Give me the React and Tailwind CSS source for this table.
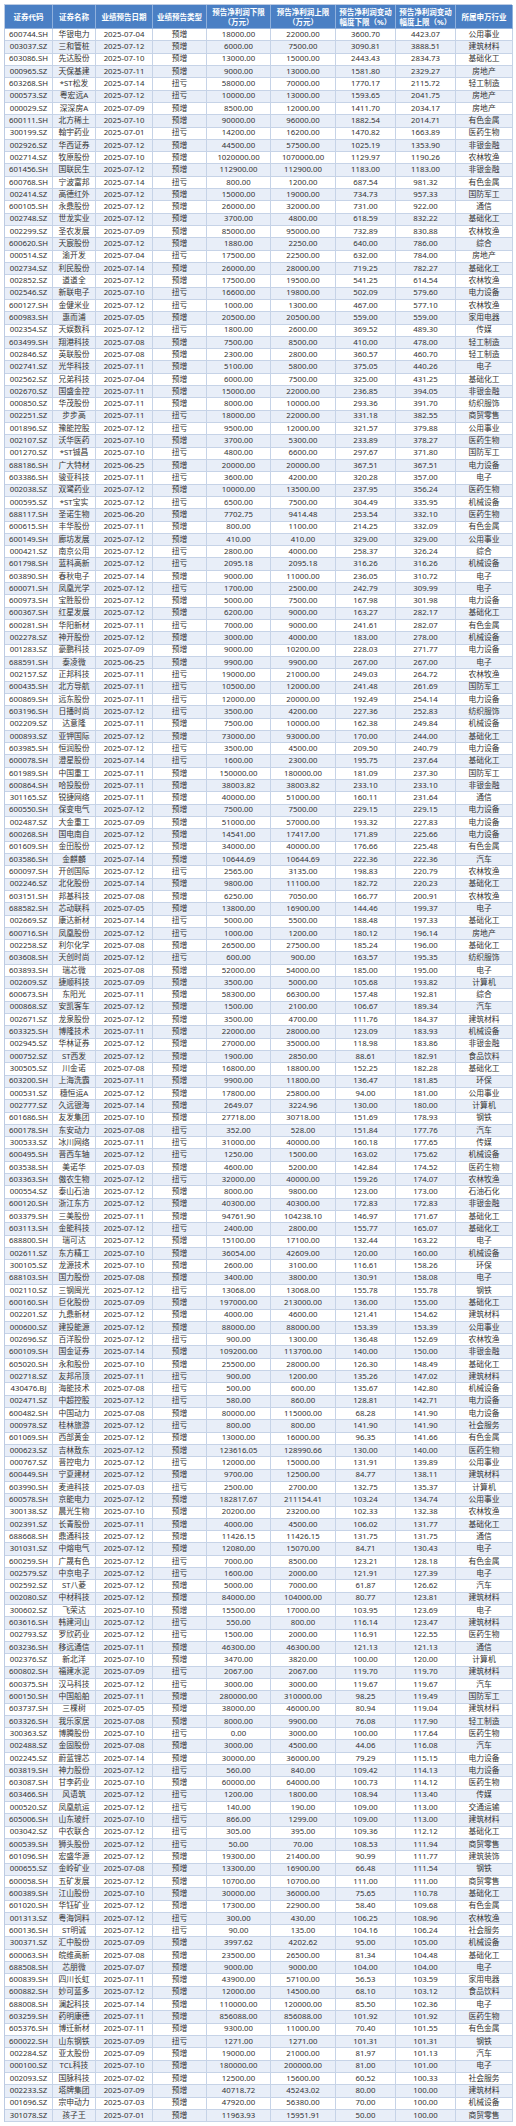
import React from 'react';

const headers = [
  ['证券代码'],
  ['证券名称'],
  ['业绩预告日期'],
  ['业绩预告类型'],
  ['预告净利润下限', '（万元）'],
  ['预告净利润上限', '（万元）'],
  ['预告净利润变动', '幅度下限（%）'],
  ['预告净利润变动', '幅度上限（%）'],
  ['所属申万行业'],
];

const raw = `
600744.SH 华银电力 2025-07-04 预增 18000.00 22000.00 3600.70 4423.07 公用事业
003037.SZ 三和管桩 2025-07-12 预增 6000.00 7500.00 3090.81 3888.51 建筑材料
603086.SH 先达股份 2025-07-10 预增 13000.00 15000.00 2443.43 2834.73 基础化工
000965.SZ 天保基建 2025-07-11 预增 9000.00 13000.00 1581.80 2329.27 房地产
603268.SH *ST松发 2025-07-14 扭亏 58000.00 70000.00 1770.17 2115.72 轻工制造
000573.SZ 粤宏远A 2025-07-12 扭亏 10000.00 13000.00 1593.65 2041.75 房地产
000029.SZ 深深房A 2025-07-09 预增 8500.00 12000.00 1411.70 2034.17 房地产
600111.SH 北方稀土 2025-07-10 预增 90000.00 96000.00 1882.54 2014.71 有色金属
300199.SZ 翰宇药业 2025-07-01 扭亏 14200.00 16200.00 1470.82 1663.89 医药生物
002926.SZ 华西证券 2025-07-12 预增 44500.00 57500.00 1025.19 1353.90 非银金融
002714.SZ 牧原股份 2025-07-10 预增 1020000.00 1070000.00 1129.97 1190.26 农林牧渔
601456.SH 国联民生 2025-07-12 预增 112900.00 112900.00 1183.00 1183.00 非银金融
600768.SH 宁波富邦 2025-07-14 扭亏 800.00 1200.00 687.54 981.32 有色金属
002414.SZ 高德红外 2025-07-12 预增 15000.00 19000.00 734.73 957.33 国防军工
600105.SH 永鼎股份 2025-07-12 预增 26000.00 32000.00 731.00 922.00 通信
002748.SZ 世龙实业 2025-07-12 预增 3700.00 4800.00 618.59 832.22 基础化工
002299.SZ 圣农发展 2025-07-09 预增 85000.00 95000.00 732.89 830.88 农林牧渔
600620.SH 天宸股份 2025-07-12 预增 1880.00 2250.00 640.00 786.00 综合
000514.SZ 渝开发 2025-07-04 扭亏 17500.00 22500.00 632.00 784.00 房地产
002734.SZ 利民股份 2025-07-14 预增 26000.00 28000.00 719.25 782.27 基础化工
002852.SZ 道道全 2025-07-12 预增 17500.00 19500.00 541.25 614.54 农林牧渔
002546.SZ 新联电子 2025-07-10 扭亏 16600.00 19800.00 502.09 579.60 电力设备
600127.SH 金健米业 2025-07-12 扭亏 1000.00 1300.00 467.00 577.10 农林牧渔
600983.SH 惠而浦 2025-07-05 预增 20500.00 20500.00 559.00 559.00 家用电器
002354.SZ 天娱数科 2025-07-12 扭亏 1800.00 2600.00 369.52 489.30 传媒
603499.SH 翔港科技 2025-07-08 预增 7500.00 8500.00 410.00 478.00 轻工制造
002846.SZ 英联股份 2025-07-08 预增 2300.00 2800.00 360.57 460.70 轻工制造
002741.SZ 光华科技 2025-07-11 预增 5100.00 5800.00 375.05 440.26 电子
002562.SZ 兄弟科技 2025-07-04 预增 6000.00 7500.00 325.00 431.25 基础化工
002670.SZ 国盛金控 2025-07-11 预增 15000.00 22000.00 236.85 394.05 非银金融
000850.SZ 华茂股份 2025-07-11 预增 8000.00 10000.00 293.36 391.70 纺织服饰
002251.SZ 步步高 2025-07-11 扭亏 18000.00 22000.00 331.18 382.55 商贸零售
001896.SZ 豫能控股 2025-07-12 扭亏 9500.00 12000.00 321.57 379.88 公用事业
002107.SZ 沃华医药 2025-07-10 预增 3700.00 5300.00 233.89 378.27 医药生物
001270.SZ *ST铖昌 2025-07-10 扭亏 4800.00 6600.00 297.67 371.80 国防军工
688186.SH 广大特材 2025-06-25 预增 20000.00 20000.00 367.51 367.51 电力设备
603386.SH 骏亚科技 2025-07-11 扭亏 3600.00 4200.00 320.28 357.00 电子
002038.SZ 双鹭药业 2025-07-12 预增 10000.00 13500.00 237.95 356.24 医药生物
000595.SZ *ST宝实 2025-07-12 扭亏 6500.00 7500.00 304.49 335.95 机械设备
688117.SH 圣诺生物 2025-06-20 预增 7702.75 9414.48 253.54 332.10 医药生物
600615.SH 丰华股份 2025-07-11 预增 800.00 1100.00 214.25 332.09 有色金属
600149.SH 廊坊发展 2025-07-12 预增 410.00 410.00 329.00 329.00 公用事业
000421.SZ 南京公用 2025-07-12 扭亏 2800.00 4000.00 258.37 326.24 综合
601798.SH 蓝科高新 2025-07-12 扭亏 2095.18 2095.18 316.26 316.26 机械设备
603890.SH 春秋电子 2025-07-14 预增 9000.00 11000.00 236.05 310.72 电子
600071.SH 凤凰光学 2025-07-12 扭亏 1700.00 2500.00 242.79 309.99 电子
600973.SH 宝胜股份 2025-07-12 预增 5000.00 7500.00 167.98 301.98 电力设备
600367.SH 红星发展 2025-07-12 预增 6200.00 9000.00 163.27 282.17 基础化工
600281.SH 华阳新材 2025-07-11 扭亏 7000.00 9000.00 241.61 282.07 有色金属
002278.SZ 神开股份 2025-07-12 预增 3000.00 4000.00 183.00 278.00 机械设备
001283.SZ 豪鹏科技 2025-07-09 预增 9000.00 10200.00 228.03 271.77 电力设备
688591.SH 泰凌微 2025-06-25 预增 9900.00 9900.00 267.00 267.00 电子
002157.SZ 正邦科技 2025-07-11 扭亏 19000.00 21000.00 249.03 264.72 农林牧渔
600435.SH 北方导航 2025-07-11 扭亏 10500.00 12000.00 241.48 261.69 国防军工
600869.SH 远东股份 2025-07-11 扭亏 12000.00 20000.00 192.49 254.14 电力设备
603196.SH 日播时尚 2025-07-12 扭亏 3500.00 4200.00 227.36 252.83 纺织服饰
002209.SZ 达意隆 2025-07-11 预增 7500.00 10000.00 162.38 249.84 机械设备
000893.SZ 亚钾国际 2025-07-12 预增 73000.00 93000.00 170.00 244.00 基础化工
603985.SH 恒润股份 2025-07-12 扭亏 3500.00 4500.00 209.50 240.79 电力设备
600078.SH 澄星股份 2025-07-14 扭亏 1600.00 2300.00 195.75 237.64 基础化工
601989.SH 中国重工 2025-07-11 预增 150000.00 180000.00 181.09 237.30 国防军工
600864.SH 哈投股份 2025-07-11 预增 38003.82 38003.82 233.10 233.10 非银金融
301165.SZ 锐捷网络 2025-07-11 预增 40000.00 51000.00 160.11 231.64 通信
600550.SH 保变电气 2025-07-12 预增 7500.00 7500.00 229.15 229.15 电力设备
002487.SZ 大金重工 2025-07-09 预增 51000.00 57000.00 193.32 227.83 电力设备
600268.SH 国电南自 2025-07-12 预增 14541.00 17417.00 171.89 225.66 电力设备
601609.SH 金田股份 2025-07-12 预增 34000.00 40000.00 176.66 225.48 有色金属
603586.SH 金麒麟 2025-07-14 预增 10644.69 10644.69 222.36 222.36 汽车
600097.SH 开创国际 2025-07-12 扭亏 2565.00 3135.00 198.83 220.79 农林牧渔
002246.SZ 北化股份 2025-07-14 预增 9800.00 11100.00 182.72 220.23 基础化工
603151.SH 邦基科技 2025-07-08 预增 6250.00 7050.00 166.77 200.91 农林牧渔
688582.SH 芯动联科 2025-07-05 预增 13800.00 16900.00 144.46 199.37 电子
002669.SZ 康达新材 2025-07-14 扭亏 5000.00 5500.00 188.48 197.33 基础化工
600716.SH 凤凰股份 2025-07-12 扭亏 1000.00 1200.00 180.12 196.14 房地产
002258.SZ 利尔化学 2025-07-08 预增 26500.00 27500.00 185.24 196.00 基础化工
603608.SH 天创时尚 2025-07-12 扭亏 600.00 900.00 163.57 195.35 纺织服饰
603893.SH 瑞芯微 2025-07-08 预增 52000.00 54000.00 185.00 195.00 电子
002609.SZ 捷顺科技 2025-07-09 预增 3500.00 5000.00 105.68 193.82 计算机
600673.SH 东阳光 2025-07-11 预增 58300.00 66300.00 157.48 192.81 综合
000868.SZ 安凯客车 2025-07-12 预增 1500.00 2100.00 106.67 189.34 汽车
002671.SZ 龙泉股份 2025-07-12 预增 3500.00 4700.00 111.76 184.37 建筑材料
603325.SH 博隆技术 2025-07-11 预增 22000.00 28000.00 123.09 183.93 机械设备
002945.SZ 华林证券 2025-07-12 预增 27000.00 35000.00 118.98 183.86 非银金融
000752.SZ ST西发 2025-07-12 预增 1900.00 2850.00 88.61 182.91 食品饮料
300505.SZ 川金诺 2025-07-08 预增 16800.00 18800.00 152.25 182.28 基础化工
603200.SH 上海洗霸 2025-07-11 预增 9900.00 11800.00 136.47 181.85 环保
000531.SZ 穗恒运A 2025-07-12 预增 17800.00 25800.00 94.00 181.00 公用事业
002777.SZ 久远银海 2025-07-14 预增 2649.07 3224.96 130.00 180.00 计算机
601686.SH 友发集团 2025-07-10 预增 27718.00 30718.00 151.69 178.93 钢铁
600178.SH 东安动力 2025-07-08 扭亏 352.00 528.00 151.84 177.76 汽车
300533.SZ 冰川网络 2025-07-11 扭亏 31000.00 40000.00 160.18 177.65 传媒
600495.SH 晋西车轴 2025-07-12 扭亏 1250.00 1500.00 163.02 175.62 机械设备
603538.SH 美诺华 2025-07-03 预增 4600.00 5200.00 142.84 174.52 医药生物
603363.SH 傲农生物 2025-07-12 扭亏 32000.00 40000.00 159.26 174.07 农林牧渔
000554.SZ 泰山石油 2025-07-12 预增 8000.00 9800.00 123.00 173.00 石油石化
600120.SH 浙江东方 2025-07-12 预增 40300.00 40300.00 172.83 172.83 非银金融
603379.SH 三美股份 2025-07-11 预增 94761.90 104238.10 146.97 171.67 基础化工
603113.SH 金能科技 2025-07-12 扭亏 2400.00 2800.00 155.77 165.07 基础化工
688800.SH 瑞可达 2025-07-12 预增 15100.00 17100.00 132.44 163.22 电子
002611.SZ 东方精工 2025-07-10 预增 36054.00 42609.00 120.00 160.00 机械设备
300105.SZ 龙源技术 2025-07-10 预增 2600.00 3100.00 116.61 158.26 环保
688103.SH 国力股份 2025-07-08 预增 3400.00 3800.00 130.91 158.08 电子
002110.SZ 三钢闽光 2025-07-12 扭亏 13068.00 13068.00 155.78 155.78 钢铁
600160.SH 巨化股份 2025-07-09 预增 197000.00 213000.00 136.00 155.00 基础化工
002201.SZ 九鼎新材 2025-07-12 预增 4000.00 4600.00 121.41 154.62 建筑材料
000600.SZ 建投能源 2025-07-12 预增 88000.00 88000.00 153.39 153.39 公用事业
002696.SZ 百洋股份 2025-07-12 扭亏 900.00 1300.00 136.48 152.69 农林牧渔
600109.SH 国金证券 2025-07-14 预增 109200.00 113700.00 140.00 150.00 非银金融
605020.SH 永和股份 2025-07-10 预增 25500.00 28000.00 126.30 148.49 基础化工
002718.SZ 友邦吊顶 2025-07-11 扭亏 900.00 1200.00 135.26 147.02 建筑材料
430476.BJ 海能技术 2025-07-08 扭亏 500.00 600.00 135.67 142.80 机械设备
002471.SZ 中超控股 2025-07-12 扭亏 580.00 860.00 128.81 142.71 电力设备
600482.SH 中国动力 2025-07-08 预增 80000.00 115000.00 68.28 141.90 电力设备
000978.SZ 桂林旅游 2025-07-12 扭亏 800.00 800.00 141.90 141.90 社会服务
601069.SH 西部黄金 2025-07-12 预增 13000.00 16000.00 96.35 141.66 有色金属
000623.SZ 吉林敖东 2025-07-12 预增 123616.05 128990.66 130.00 140.00 医药生物
000767.SZ 晋控电力 2025-07-12 扭亏 12000.00 15000.00 131.91 139.89 公用事业
600449.SH 宁夏建材 2025-07-12 预增 9700.00 12500.00 84.77 138.11 建筑材料
603990.SH 麦迪科技 2025-07-03 扭亏 2500.00 2700.00 132.75 135.37 计算机
600578.SH 京能电力 2025-07-12 预增 182817.67 211154.41 103.24 134.74 公用事业
300138.SZ 晨光生物 2025-07-10 预增 20200.00 23200.00 102.33 132.38 农林牧渔
002391.SZ 长青股份 2025-07-11 预增 4000.00 4500.00 106.02 131.77 基础化工
688668.SH 鼎通科技 2025-07-12 预增 11426.15 11426.15 131.75 131.75 通信
301031.SZ 中熔电气 2025-07-12 预增 12080.00 15070.00 84.71 130.43 电子
600259.SH 广晟有色 2025-07-12 扭亏 7000.00 8500.00 123.21 128.18 有色金属
002579.SZ 中京电子 2025-07-12 扭亏 1600.00 2000.00 121.91 127.39 电子
002592.SZ ST八菱 2025-07-12 预增 5000.00 7000.00 61.87 126.62 汽车
002080.SZ 中材科技 2025-07-12 预增 84000.00 104000.00 80.77 123.81 建筑材料
300602.SZ 飞荣达 2025-07-10 预增 15500.00 17000.00 103.95 123.69 电子
603616.SH 韩建河山 2025-07-12 扭亏 550.00 800.00 116.14 123.47 建筑材料
002793.SZ 罗欣药业 2025-07-12 扭亏 1500.00 2000.00 116.91 122.55 医药生物
603236.SH 移远通信 2025-07-11 预增 46300.00 46300.00 121.13 121.13 通信
002376.SZ 新北洋 2025-07-10 预增 3470.00 3820.00 100.00 120.00 计算机
600802.SH 福建水泥 2025-07-09 扭亏 2067.00 2067.00 119.70 119.70 建筑材料
600375.SH 汉马科技 2025-07-12 扭亏 3000.00 3000.00 119.67 119.67 汽车
600150.SH 中国船舶 2025-07-11 预增 280000.00 310000.00 98.25 119.49 国防军工
603737.SH 三棵树 2025-07-05 预增 38000.00 46000.00 80.94 119.04 建筑材料
603326.SH 我乐家居 2025-07-08 预增 8000.00 9900.00 76.08 117.90 轻工制造
300363.SZ 博腾股份 2025-07-10 扭亏 0.00 3000.00 100.00 117.64 医药生物
002488.SZ 金固股份 2025-07-08 预增 3000.00 4500.00 44.06 116.08 汽车
002245.SZ 蔚蓝锂芯 2025-07-14 预增 30000.00 36000.00 79.29 115.15 电力设备
603819.SH 神力股份 2025-07-12 扭亏 560.00 840.00 109.42 114.13 电力设备
603087.SH 甘李药业 2025-07-10 预增 60000.00 64000.00 100.73 114.12 医药生物
603466.SH 风语筑 2025-07-12 扭亏 1200.00 1800.00 108.94 113.40 传媒
000520.SZ 凤凰航运 2025-07-12 扭亏 140.00 190.00 109.00 113.00 交通运输
605006.SH 山东玻纤 2025-07-10 扭亏 866.00 1299.00 109.00 113.00 建筑材料
003042.SZ 中农联合 2025-07-12 扭亏 305.00 395.00 109.36 112.12 基础化工
600539.SH 狮头股份 2025-07-12 扭亏 50.00 70.00 108.53 111.94 商贸零售
601096.SH 宏盛华源 2025-07-12 预增 19300.00 21400.00 90.99 111.77 建筑装饰
000655.SZ 金岭矿业 2025-07-08 预增 13300.00 16900.00 66.48 111.54 钢铁
600058.SH 五矿发展 2025-07-12 预增 10700.00 10700.00 111.00 111.00 商贸零售
600389.SH 江山股份 2025-07-10 预增 30000.00 36000.00 75.65 110.78 基础化工
601020.SH 华钰矿业 2025-07-12 预增 17300.00 22900.00 58.40 109.68 有色金属
001313.SZ 粤海饲料 2025-07-12 扭亏 300.00 430.00 106.25 108.96 农林牧渔
600136.SH ST明诚 2025-07-12 扭亏 90.00 135.00 104.16 106.24 社会服务
300371.SZ 汇中股份 2025-07-09 预增 3997.62 4202.62 95.00 105.00 机械设备
600063.SH 皖维高新 2025-07-08 预增 23500.00 26500.00 81.34 104.48 基础化工
688508.SH 芯朋微 2025-07-07 预增 9000.00 9000.00 104.00 104.00 电子
600839.SH 四川长虹 2025-07-11 预增 43900.00 57100.00 56.53 103.59 家用电器
600882.SH 妙可蓝多 2025-07-12 预增 12000.00 14500.00 68.10 103.12 食品饮料
688008.SH 澜起科技 2025-07-14 预增 110000.00 120000.00 85.50 102.36 电子
603259.SH 药明康德 2025-07-11 预增 856088.00 856088.00 101.92 101.92 医药生物
605376.SH 博迁新材 2025-07-11 预增 9300.00 11000.00 70.40 101.55 有色金属
600022.SH 山东钢铁 2025-07-09 扭亏 1271.00 1271.00 101.31 101.31 钢铁
002284.SZ 亚太股份 2025-07-09 预增 19000.00 21000.00 81.97 101.13 汽车
000100.SZ TCL科技 2025-07-10 预增 180000.00 200000.00 81.00 101.00 电子
002093.SZ 国脉科技 2025-07-02 预增 12500.00 15600.00 60.52 100.33 社会服务
002233.SZ 塔牌集团 2025-07-09 预增 40718.72 45243.02 80.00 100.00 建筑材料
001696.SZ 宗申动力 2025-07-03 预增 47920.00 56380.00 70.00 100.00 机械设备
301078.SZ 孩子王 2025-07-01 预增 11963.93 15951.91 50.00 100.00 商贸零售
`;

const rows = raw.trim().split('\n').map((line) => line.trim().split(/\s+/));

const gridCols = 'grid grid-cols-[48px_43px_57px_54px_64px_65px_60px_60px_57px]';

export default function App() {
  return (
    <div className="w-[516px] bg-white p-[4px]" style={{ fontFamily: '"Noto Sans", "Noto Sans CJK SC", sans-serif' }}>
      <div className="w-[508px] border-l border-t border-[#bccbe3]">
        {/* header */}
        <div className={`${gridCols} h-[24px] bg-[#4a7fc4]`}>
          {headers.map((lines, i) => (
            <div
              key={i}
              className="flex flex-col items-center justify-center border-r border-b border-[#8fb0dc] text-[7.5px] font-bold leading-[10px] text-white"
            >
              {lines.map((t) => (
                <span key={t}>{t}</span>
              ))}
            </div>
          ))}
        </div>

        {/* body */}
        {rows.map((r, idx) => (
          <div
            key={r[0]}
            className={`${gridCols} h-[12.32px] ${idx % 2 === 1 ? 'bg-[#e8eef8]' : 'bg-white'}`}
          >
            {r.map((cell, j) => (
              <div
                key={j}
                className="flex items-center justify-center overflow-hidden whitespace-nowrap border-r border-b border-[#c6d3e7] text-[7.8px] leading-none text-[#333]"
              >
                {cell}
              </div>
            ))}
          </div>
        ))}
      </div>
    </div>
  );
}
